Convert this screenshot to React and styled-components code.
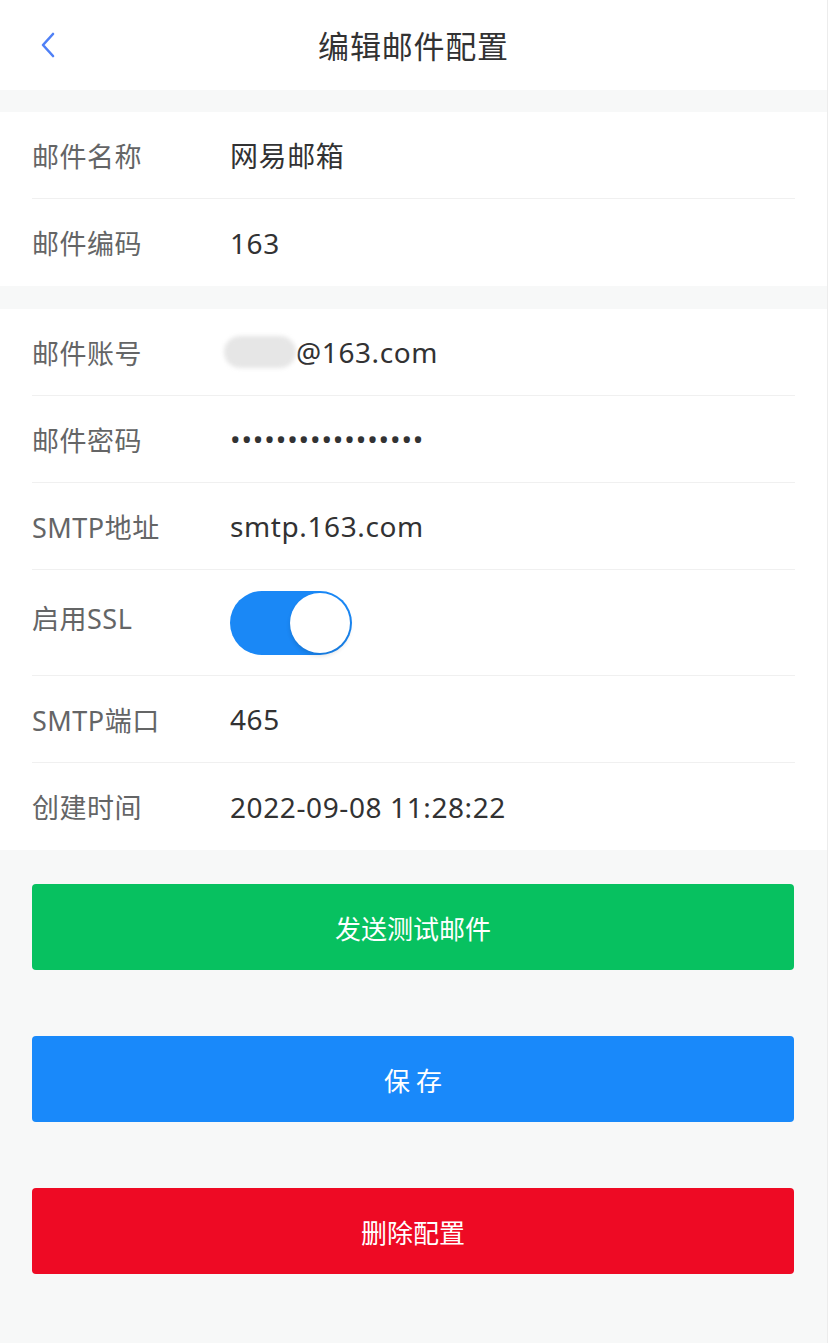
import React, { useState } from "react";
import styled, { createGlobalStyle } from "styled-components";

const GlobalStyle = createGlobalStyle`
  html, body {
    margin: 0;
    padding: 0;
    background: #f7f8f8;
  }
  * {
    box-sizing: border-box;
  }
`;

const fields = [
  [
    { label: "邮件名称", value: "网易邮箱" },
    { label: "邮件编码", value: "163" },
  ],
  [
    { label: "邮件账号", value: "@163.com", masked: true },
    { label: "邮件密码", value: "•".repeat(17), password: true },
    { label: "SMTP地址", value: "smtp.163.com" },
    { label: "启用SSL", toggle: true },
    { label: "SMTP端口", value: "465" },
    { label: "创建时间", value: "2022-09-08 11:28:22" },
  ],
];

const App = () => {
  const [ssl, setSsl] = useState(true);

  return (
    <Page>
      <GlobalStyle />
      <Header>
        <Back aria-label="back">
          <svg width="16" height="28" viewBox="0 0 16 28">
            <polyline
              points="13,3 3,14 13,25"
              fill="none"
              stroke="#4f80f6"
              strokeWidth="2.6"
              strokeLinecap="round"
              strokeLinejoin="round"
            />
          </svg>
        </Back>
        <Title>编辑邮件配置</Title>
      </Header>

      {fields.map((group, gi) => (
        <Group key={gi}>
          {group.map((f) => (
            <Row key={f.label} tall={f.toggle}>
              <Label up={f.toggle}>{f.label}</Label>
              {f.toggle ? (
                <Switch on={ssl} onClick={() => setSsl(!ssl)}>
                  <Knob on={ssl} />
                </Switch>
              ) : (
                <Value password={f.password}>
                  {f.masked && <Blur />}
                  {f.value}
                </Value>
              )}
            </Row>
          ))}
        </Group>
      ))}

      <Actions>
        <Button color="#07c160">发送测试邮件</Button>
        <Button color="#1989fa">保 存</Button>
        <Button color="#ee0a24">删除配置</Button>
      </Actions>
    </Page>
  );
};

const Page = styled.div`
  width: 828px;
  min-height: 1343px;
  background: #f7f8f8;
  border-right: 1px solid #ececec;
  font-family: "Noto Sans", "Noto Sans CJK SC", sans-serif;
`;

const Header = styled.div`
  position: relative;
  height: 90px;
  background: #ffffff;
  display: flex;
  align-items: center;
  justify-content: center;
`;

const Back = styled.div`
  position: absolute;
  left: 40px;
  top: 31px;
  width: 16px;
  height: 28px;
  display: flex;
`;

const Title = styled.div`
  font-family: "Noto Sans CJK SC", sans-serif;
  font-size: 31px;
  color: #323233;
  letter-spacing: 0.8px;
  margin-top: -2px;
`;

const Group = styled.div`
  background: #ffffff;
  margin-top: 22px;
  & + & {
    margin-top: 23px;
  }
`;

const Row = styled.div`
  height: ${(p) => (p.tall ? "106px" : "87px")};
  margin: 0 32px;
  display: flex;
  align-items: center;
  border-bottom: 1px solid #f0f0f0;
  &:last-child {
    border-bottom: none;
  }
`;

const Label = styled.div`
  width: 198px;
  flex-shrink: 0;
  font-size: 27px;
  color: #646566;
  letter-spacing: 0.5px;
  font-family: "Noto Sans", "Noto Sans CJK SC", sans-serif;
  margin-top: ${(p) => (p.up ? "-10px" : "0")};
`;

const Value = styled.div`
  position: relative;
  display: flex;
  align-items: center;
  color: #323233;
  font-size: 28px;
  letter-spacing: ${(p) => (p.password ? "0.9px" : "0.6px")};
`;

const Blur = styled.span`
  display: inline-block;
  width: 72px;
  height: 32px;
  margin-left: -6px;
  border-radius: 16px;
  background: #e6e6e6;
  filter: blur(2px);
`;

const Switch = styled.div`
  position: relative;
  width: 122px;
  height: 64px;
  border-radius: 32px;
  background: ${(p) => (p.on ? "#1a88f6" : "#e5e5e5")};
  cursor: pointer;
`;

const Knob = styled.div`
  position: absolute;
  top: 2px;
  left: ${(p) => (p.on ? "60px" : "2px")};
  width: 60px;
  height: 60px;
  border-radius: 50%;
  background: #ffffff;
  box-shadow: 0 3px 4px rgba(0, 0, 0, 0.12);
`;

const Actions = styled.div`
  display: flex;
  flex-direction: column;
  gap: 66px;
  padding: 34px 33px 68px 32px;
`;

const Button = styled.button`
  height: 86px;
  border: none;
  border-radius: 4px;
  background: ${(p) => p.color};
  color: #ffffff;
  font-family: "Noto Sans CJK SC", sans-serif;
  font-size: 26px;
  cursor: pointer;
`;

export default App;
